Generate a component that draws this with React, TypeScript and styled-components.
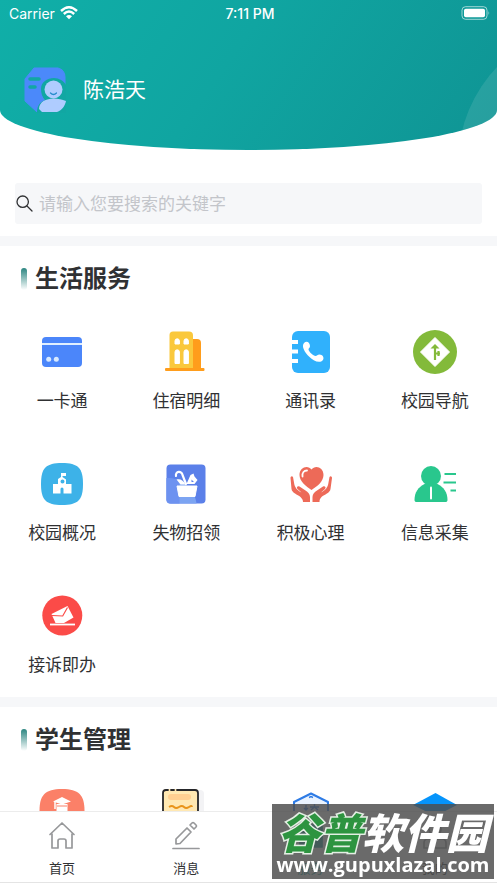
import React from 'react';
import styled, { createGlobalStyle } from 'styled-components';

const GlobalStyle = createGlobalStyle`
  *, *::before, *::after { box-sizing: border-box; }
  body {
    margin: 0;
    background: #fff;
    color: #303133;
    font-family: Inter, "Noto Sans CJK SC", sans-serif;
  }
  button, input { font: inherit; color: inherit; }
`;

const Screen = styled.div`
  height: 100vh;
  display: flex;
  flex-direction: column;
  overflow: hidden;
`;

const Content = styled.main`
  flex: 1;
  min-height: 0;
  overflow-y: auto;
  scrollbar-width: none;
`;

const Header = styled.header`
  position: relative;
  overflow: hidden;
  height: 150px;
  color: #fff;
  background: linear-gradient(125deg, #10afa8 0%, #10a5a1 45%, #0f9494 100%);
  border-radius: 0 0 50% 50% / 0 0 40px 40px;
`;

const HeaderGlow = styled.span`
  position: absolute;
  top: 24px;
  left: calc(100% - 39px);
  width: 280px;
  height: 280px;
  border-radius: 50%;
  background: rgba(255, 255, 255, 0.1);
`;

const StatusBar = styled.div`
  display: grid;
  grid-template-columns: 1fr auto 1fr;
  align-items: center;
  height: 26px;
  padding: 0 6px 0 9px;
  font-size: 14px;
`;

const Carrier = styled.span`
  display: flex;
  align-items: center;
  gap: 5px;
`;

const Clock = styled.time`
  font-weight: 500;
`;

const Battery = styled.svg`
  justify-self: end;
`;

const Profile = styled.div`
  display: flex;
  align-items: center;
  gap: 16px;
  padding: 41px 24px 0;
`;

const UserName = styled.h1`
  margin: 0;
  font-size: 21px;
  line-height: 32px;
  font-weight: 400;
`;

const SearchBox = styled.label`
  display: flex;
  align-items: center;
  gap: 6px;
  height: 41px;
  margin: 33px 15px 12px;
  padding: 0 1px;
  border-radius: 3px;
  background: #f6f7f9;
`;

const SearchInput = styled.input`
  flex: 1;
  min-width: 0;
  padding: 0;
  border: 0;
  outline: 0;
  background: transparent;
  font-size: 17px;
  line-height: 24px;
  &::placeholder { color: #c3c5ca; opacity: 1; }
`;

const Section = styled.section`
  border-top: 10px solid #f6f7f9;
  padding-bottom: 20px;
`;

const SectionTitle = styled.h2`
  display: flex;
  align-items: center;
  gap: 8px;
  margin: 0;
  padding: 15px 21px 0;
  font-size: 24px;
  line-height: 36px;
  font-weight: 600;
  &::before {
    content: '';
    width: 6px;
    height: 22px;
    border-radius: 3px;
    background: linear-gradient(#2b8580, #fff);
  }
`;

const ServiceGrid = styled.div`
  display: grid;
  grid-template-columns: repeat(4, 1fr);
  row-gap: 35px;
  padding-top: 19px;
`;

const ServiceButton = styled.button`
  display: flex;
  flex-direction: column;
  align-items: center;
  gap: 13px;
  padding: 12px 0 0;
  border: 0;
  background: none;
  font-size: 17px;
  line-height: 24px;
  svg { display: block; flex: none; }
`;

const TabBar = styled.nav`
  display: grid;
  grid-template-columns: repeat(4, 1fr);
  height: 72px;
  border-top: 1px solid #ececec;
  border-bottom: 1px solid #e4e4e4;
  background: #fff;
`;

const Tab = styled.button<{ $active?: boolean }>`
  display: flex;
  flex-direction: column;
  align-items: center;
  gap: 6px;
  padding: 8px 0 0;
  border: 0;
  background: none;
  color: ${(p) => (p.$active ? '#159c98' : '#303133')};
  font-size: 13px;
  line-height: 20px;
`;

const Watermark = styled.aside`
  position: fixed;
  right: 3px;
  bottom: 4px;
  width: 222px;
  height: 75px;
  background: rgba(78, 78, 78, 0.84);
  color: #fff;
  pointer-events: none;
  white-space: nowrap;
`;

const WatermarkName = styled.div`
  display: flex;
  justify-content: center;
  padding-top: 4px;
  font-family: "Noto Sans CJK SC", sans-serif;
  font-size: 42px;
  line-height: 46px;
  font-weight: 900;
  font-style: italic;
`;

const WatermarkAccent = styled.span`
  color: #2d9440;
  -webkit-text-stroke: 3px #e4efe4;
  paint-order: stroke fill;
`;

const WatermarkUrl = styled.div`
  text-align: center;
  font-family: "Open Sans", sans-serif;
  font-size: 20px;
  line-height: 22px;
  font-weight: 700;
`;

const Icon = ({ children }: { children: React.ReactNode }) => (
  <svg width="48" height="48" viewBox="0 0 48 48" fill="none" aria-hidden="true">
    {children}
  </svg>
);

const CardIcon = () => (
  <Icon>
    <rect x="4" y="9" width="40" height="30" rx="4" fill="#4b86fa" />
    <path d="M4 16h40" stroke="#e0efff" strokeWidth="2" />
    <circle cx="10.7" cy="31.3" r="2.5" fill="#d7e9ff" />
    <circle cx="18.3" cy="31.3" r="2.5" fill="#d7e9ff" />
  </Icon>
);

const BuildingIcon = () => (
  <Icon>
    <path d="M29 11h6a4 4 0 0 1 4 4v26H26V11z" fill="#ff9d1c" />
    <path d="M11 3.500h16a4 4 0 0 1 4 4V41H7.500V7a3.500 3.500 0 0 1 3.500-3.500z" fill="#fac83c" />
    <rect x="3" y="40" width="39.500" height="3" rx="1" fill="#ff9d1c" />
    <path
      d="M13 16v-3a2.200 2.200 0 0 1 4.400 0v3zM22 16v-3a2.200 2.200 0 0 1 4.400 0v3zM13 35.500V24a2.200 2.200 0 0 1 4.400 0v11.500zM22 35.500V24a2.200 2.200 0 0 1 4.400 0v11.500z"
      fill="#fff"
      stroke="#fff"
      strokeLinejoin="round"
    />
  </Icon>
);

const PhoneBookIcon = () => (
  <Icon>
    <rect x="5" y="3" width="38" height="42" rx="6" fill="#30b1fc" />
    <path d="M4 14h7M4 23.500h7M4 33h7" stroke="#fff" strokeWidth="4" />
    <path
      d="M17 15c3-3 6 0 6 3 0 2-1.500 2-1.500 3.500 0 2 5 6.500 7 6.500 1.500 0 2-1.500 4-1.500 3 0 5 3 3.500 5.500-3 4-10 1-14-3.500-4-4-8-10-5-13.500z"
      fill="#fff"
    />
  </Icon>
);

const NavigationIcon = () => (
  <Icon>
    <circle cx="24" cy="24" r="22" fill="#83ba3a" />
    <path d="M24 9.500 38.500 24 24 38.500 9.500 24z" fill="#fff" stroke="#fff" strokeLinejoin="round" />
    <path d="M24 32V19M24 25.500H29M27.500 28V23" stroke="#83ba3a" strokeWidth="2.200" />
    <path d="M19.500 20.500 24 16l4.500 4.500z" fill="#83ba3a" />
  </Icon>
);

const CampusIcon = () => (
  <Icon>
    <path d="M24 3c16 0 21 5 21 21s-5 21-21 21S3 40 3 24 8 3 24 3z" fill="#3db2e8" />
    <path
      fillRule="evenodd"
      d="M15 24h5v-5l3-2v-4h5v3h-3.500v1l3.500 2.500V24h5.500v9.500h-8V29a1.500 1.500 0 0 0-3 0v4.500H15zm9.500-4.500a2 2 0 1 0 0 4 2 2 0 0 0 0-4z"
      fill="#fff"
    />
  </Icon>
);

const LostFoundIcon = () => (
  <Icon>
    <rect x="4.500" y="4.500" width="39" height="39" rx="4" fill="#5b80e9" />
    <path d="M4.500 18c15 0 28 11 30 25.500H8.500a4 4 0 0 1-4-4z" fill="#7ca4f2" />
    <path d="M4.500 18c5 0 9 1 13 3v22.500h-9a4 4 0 0 1-4-4z" fill="#668aef" opacity=".7" />
    <path d="M15 26h20L33 36.500H17z" fill="#fff" stroke="#fff" strokeLinejoin="round" />
    <path d="M14 16c-1-5 6-5.500 6.500-1l3.500 9" stroke="#fff" strokeWidth="2.200" strokeLinecap="round" />
    <path d="M14.500 19.500c4-1 7 1 9 5h-5z" fill="#fff" />
    <path fillRule="evenodd" d="M24.500 24 28.500 15l3-1.500 1 3 3 3.500-3 4zm5-4.500v2.500h2.500z" fill="#fff" />
  </Icon>
);

const HeartHandsIcon = () => (
  <Icon>
    <path
      d="M24.500 30C19 26 12.500 21.500 12.500 15 12.500 7 21 4.500 24.500 9.500c3.500-5 12-2.500 12 5.500 0 6.500-6.500 11.500-12 15z"
      fill="#ed6a58"
    />
    <path d="M15.500 16.500c-.500-4 1.500-6 4.500-6" stroke="#fff" strokeWidth="1.800" strokeLinecap="round" />
    <path
      d="M23 42v-5c0-3-2-5-4.500-6.500l-6-4c-2-1-3.500 1-2 2.500l4 3.500c-4-2-7-5-7.500-10L6 17c-1-1.500-2.500-.500-2.500 1l1 11c.500 4 6 5.500 9 8 1.500 1.500 2.500 3 2.500 5z"
      fill="#ed6a58"
    />
    <path
      d="M25.500 42v-5c0-3 2-5 4.500-6.500l6-4c2-1 3.500 1 2 2.500l-4 3.500c4-2 7-5 7.500-10l1-5.500c1-1.500 2.500-.500 2.500 1l-1.500 11c-.500 4-6 5.500-9 8-1.500 1.500-2 3-2 5z"
      fill="#ed6a58"
    />
  </Icon>
);

const CollectIcon = () => (
  <Icon>
    <circle cx="20" cy="16" r="10" fill="#29c78d" />
    <path
      d="M13.500 24h13c6 3 10 8 10 16 0 1.500-1 2-2 2h-29c-1 0-2-.500-2-2 0-8 4-13 10-16z"
      fill="#29c78d"
    />
    <path d="M20 27.500v11" stroke="#fff" strokeWidth="2" strokeLinecap="round" />
    <path d="M33.500 14H45M32.500 22.500H45M39.500 30.500H45" stroke="#29c78d" strokeWidth="2.200" />
  </Icon>
);

const ComplaintIcon = () => (
  <Icon>
    <circle cx="24.300" cy="23.500" r="20" fill="#fb4b48" />
    <path d="M12 32.500h25" stroke="#fff" strokeWidth="1.800" />
    <path d="M13.500 22 29.500 14l6 11.500L26 31h-8.500z" fill="#fff" />
    <path d="m14 23.500 10.700.500L29.500 15.500" stroke="#fb4b48" strokeWidth="1.200" />
  </Icon>
);

const GraduateIcon = () => (
  <Icon>
    <path d="M24 0c17 0 22.500 6 22.500 22S41 44 24 44 1.500 38 1.500 22 7 0 24 0z" fill="#fb8068" />
    <path d="m15 12.500 9-4.500 9 4.500-9 3zM18.500 15h11v10h-11z" fill="#fff" />
    <path d="M17 13v7" stroke="#fff" strokeWidth="1.500" />
    <path d="M19 17h10" stroke="#fb8068" />
  </Icon>
);

const NoteIcon = () => (
  <Icon>
    <rect x="32" y="1" width="10" height="39" rx="4" fill="#f3f3f5" />
    <rect x="1" y="0" width="35" height="40" rx="3" fill="#ffe8b2" />
    <path d="M1 26V4a3 3 0 0 1 3-3h2M9 1h3M15 1h18a3 3 0 0 1 3 3v32" stroke="#25262a" strokeWidth="1.800" strokeLinecap="round" />
    <rect x="6" y="5" width="23" height="6" rx="3" fill="#ffcf92" />
    <path d="M7 18q3-2 5 0t5 0 5 0 5 0 3 0" stroke="#e8941a" strokeWidth="1.800" />
  </Icon>
);

const HexagonIcon = () => (
  <Icon>
    <path d="M24 4.500 41 13v22L24 44 7 35V13z" fill="#eaf3fe" stroke="#2d7be5" strokeWidth="2" strokeLinejoin="round" />
    <path d="m22 8.500 2-1 2 1M19 16v5m-2-2 2 2 2-2M23 18h9M27.500 15v3l-3.500 3m3.500-3 3.500 3" stroke="#2d7be5" strokeWidth="1.400" />
  </Icon>
);

const DiamondIcon = () => (
  <Icon>
    <path d="M24.500 4 46 16 24.500 27 2 16z" fill="#0594fb" />
    <path d="M10 22v12q14 10 28 0V22l-13.500 7z" fill="#0594fb" />
  </Icon>
);

const lifeServices = [
  { label: '一卡通', icon: <CardIcon /> },
  { label: '住宿明细', icon: <BuildingIcon /> },
  { label: '通讯录', icon: <PhoneBookIcon /> },
  { label: '校园导航', icon: <NavigationIcon /> },
  { label: '校园概况', icon: <CampusIcon /> },
  { label: '失物招领', icon: <LostFoundIcon /> },
  { label: '积极心理', icon: <HeartHandsIcon /> },
  { label: '信息采集', icon: <CollectIcon /> },
  { label: '接诉即办', icon: <ComplaintIcon /> },
];

const studentServices = [
  { name: 'graduate', icon: <GraduateIcon /> },
  { name: 'note', icon: <NoteIcon /> },
  { name: 'hexagon', icon: <HexagonIcon /> },
  { name: 'diamond', icon: <DiamondIcon /> },
];

const TabIcon = ({ children }: { children: React.ReactNode }) => (
  <svg width="30" height="32" viewBox="0 0 30 32" fill="none" stroke="#97989a" strokeWidth="1.700" strokeLinejoin="round" strokeLinecap="round" aria-hidden="true">
    {children}
  </svg>
);

export default function App() {
  return (
    <Screen>
      <GlobalStyle />
      <Content>
        <Header>
          <HeaderGlow />
          <StatusBar>
            <Carrier>
              Carrier
              <svg width="18" height="14" viewBox="0 0 18 14" fill="none" aria-label="Wi-Fi">
                <path d="M1 5q8-7.500 16 0M3.800 8q5.200-4.800 10.400 0" stroke="#fff" strokeWidth="2.400" />
                <path d="M6 10.300q3-2.600 6 0l-3 3z" fill="#fff" />
              </svg>
            </Carrier>
            <Clock>7:11 PM</Clock>
            <Battery width="30" height="14" viewBox="0 0 30 14" fill="none" aria-label="Battery">
              <rect x="1" y="0.700" width="25" height="12.600" rx="3.500" stroke="#fff" strokeOpacity=".6" />
              <rect x="3" y="2.700" width="21" height="8.600" rx="1.800" fill="#fff" />
              <path d="M27.500 5q1.500 2 0 4z" fill="#fff" opacity=".6" />
            </Battery>
          </StatusBar>
          <Profile>
            <svg width="43" height="46" viewBox="0 0 43 46" fill="none" aria-hidden="true">
              <path d="M10 1h24q7 2 7 9v35H13L1 34V12z" fill="#4b89fa" stroke="#4b89fa" strokeLinejoin="round" />
              <path d="M6 12h9M6 20h5" stroke="#11a7a3" strokeWidth="3.500" strokeLinecap="round" />
              <path d="M13 46c0-5 1-10 8-13q-4-4-4-11c0-7 6-11 13-11 5 0 10 3 12 7v28z" fill="#11a7a3" />
              <circle cx="29.500" cy="22.500" r="9" fill="#afccff" />
              <path d="M15 42c0-11 16-13 27-8-1 5-4 9-9 11H18z" fill="#afccff" />
              <path d="M26.500 26q3 3 6 0" stroke="#258bcc" strokeWidth="1.300" strokeLinecap="round" />
            </svg>
            <UserName>陈浩天</UserName>
          </Profile>
        </Header>

        <SearchBox>
          <svg width="17" height="17" viewBox="0 0 17 17" fill="none" stroke="#303133" strokeWidth="1.300" strokeLinecap="round" aria-hidden="true">
            <circle cx="6.700" cy="6.700" r="5.700" />
            <path d="m11 11 5 5" />
          </svg>
          <SearchInput type="search" aria-label="搜索" placeholder="请输入您要搜索的关键字" />
        </SearchBox>

        <Section>
          <SectionTitle>生活服务</SectionTitle>
          <ServiceGrid>
            {lifeServices.map((s) => (
              <ServiceButton key={s.label} type="button">
                {s.icon}
                {s.label}
              </ServiceButton>
            ))}
          </ServiceGrid>
        </Section>
        <Section>
          <SectionTitle>学生管理</SectionTitle>
          <ServiceGrid>
            {studentServices.map((s) => (
              <ServiceButton key={s.name} type="button" aria-label={s.name}>
                {s.icon}
              </ServiceButton>
            ))}
          </ServiceGrid>
        </Section>
      </Content>

      <TabBar>
        <Tab type="button">
          <TabIcon>
            <path d="M5 14v14h6v-7q0-2 2-2h4q2 0 2 2v7h6V14M3 14.500 15 3l12 11.500" />
          </TabIcon>
          首页
        </Tab>
        <Tab type="button">
          <TabIcon>
            <path d="M2 28.500h26M5 24v-5L16 8l4 4L9 23.500zM19 5l2-2q1-1 2 0l2 2q1 1 0 2l-2 2z" />
          </TabIcon>
          消息
        </Tab>
        <Tab type="button" $active>
          <TabIcon>
            <path d="M4 5h22v22H4z" fill="#159c98" stroke="#159c98" />
          </TabIcon>
          服务
        </Tab>
        <Tab type="button">
          <TabIcon>
            <circle cx="15" cy="9" r="6" />
            <path d="M4 28v-5q0-4 4-4h14q4 0 4 4v5z" />
          </TabIcon>
          我的
        </Tab>
      </TabBar>

      <Watermark>
        <WatermarkName>
          <WatermarkAccent>谷普</WatermarkAccent>
          软件园
        </WatermarkName>
        <WatermarkUrl>www.gupuxlazal.com</WatermarkUrl>
      </Watermark>
    </Screen>
  );
}
